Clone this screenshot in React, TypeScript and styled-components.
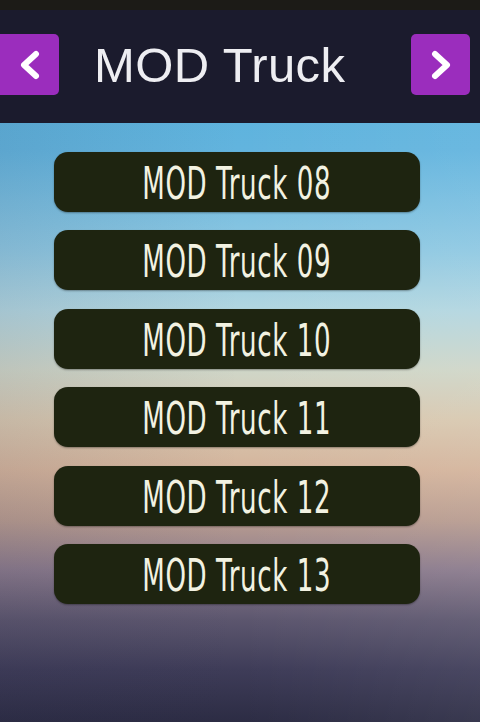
import React from "react";
import styled, { createGlobalStyle } from "styled-components";

const GlobalStyle = createGlobalStyle`
  html, body {
    margin: 0;
    padding: 0;
  }
  body {
    font-family: "Liberation Sans", Arial, sans-serif;
  }
`;

const items = ["08", "09", "10", "11", "12", "13"];

const App = () => {
  return (
    <Page>
      <GlobalStyle />
      <StatusStrip />
      <Header>
        <NavButton aria-label="previous">
          <svg width="26" height="30" viewBox="0 0 26 30">
            <path
              d="M19 4 L7 15 L19 26"
              fill="none"
              stroke="#fff"
              strokeWidth="6"
              strokeLinecap="round"
              strokeLinejoin="round"
            />
          </svg>
        </NavButton>
        <Title>MOD Truck</Title>
        <NavButton aria-label="next" $right>
          <svg width="26" height="30" viewBox="0 0 26 30">
            <path
              d="M7 4 L19 15 L7 26"
              fill="none"
              stroke="#fff"
              strokeWidth="6"
              strokeLinecap="round"
              strokeLinejoin="round"
            />
          </svg>
        </NavButton>
      </Header>
      <List>
        {items.map((n) => (
          <ModButton key={n}>
            <Label>MOD Truck {n}</Label>
          </ModButton>
        ))}
      </List>
    </Page>
  );
};

const Page = styled.div`
  width: 480px;
  height: 722px;
  overflow: hidden;
  display: flex;
  flex-direction: column;
  background:
    linear-gradient(90deg, rgba(40, 40, 70, 0.1), rgba(255, 255, 255, 0) 50%, rgba(255, 255, 255, 0.06)),
    linear-gradient(
      180deg,
      #4fb0dc 0px,
      #62b4de 150px,
      #8ec8e2 250px,
      #b2d6e0 310px,
      #cfd6c8 370px,
      #d8c8b0 420px,
      #d4b49c 470px,
      #b89c90 520px,
      #8a7a8c 570px,
      #5c566e 620px,
      #3e3c58 670px,
      #2c2c44 722px
    );
`;

const StatusStrip = styled.div`
  height: 10px;
  background: #1c1b17;
  flex-shrink: 0;
`;

const Header = styled.header`
  height: 113px;
  flex-shrink: 0;
  background: #1b1b2d;
  display: flex;
  align-items: center;
  padding-right: 10px;
  padding-bottom: 4px;
  box-sizing: border-box;
`;

const NavButton = styled.button<{ $right?: boolean }>`
  width: 59px;
  height: 61px;
  border: none;
  border-radius: ${(p) => (p.$right ? "5px" : "0 5px 5px 0")};
  background: #9b2dbd;
  display: flex;
  align-items: center;
  justify-content: center;
  padding: 0;
  flex-shrink: 0;
`;

const Title = styled.h1`
  flex: 1;
  margin: 0 0 0 35px;
  font-family: "Liberation Sans", Arial, sans-serif;
  font-weight: normal;
  font-size: 49px;
  color: #eeeef2;
  letter-spacing: 0.4px;
`;

const List = styled.div`
  display: flex;
  flex-direction: column;
  align-items: center;
  gap: 18.4px;
  padding-top: 29px;
  padding-right: 6px;
`;

const ModButton = styled.div`
  width: 366px;
  height: 60px;
  border-radius: 14px;
  background: #1e2410;
  box-shadow: 0 1px 2px rgba(0, 0, 0, 0.35);
  display: flex;
  align-items: center;
  justify-content: center;
  overflow: hidden;
`;

const Label = styled.span`
  display: inline-block;
  margin-top: 3px;
  font-family: "DejaVu Sans", sans-serif;
  font-weight: normal;
  font-size: 45px;
  color: #f2f2e2;
  white-space: nowrap;
  transform: scaleX(0.58);
  letter-spacing: 1px;
`;

export default App;
